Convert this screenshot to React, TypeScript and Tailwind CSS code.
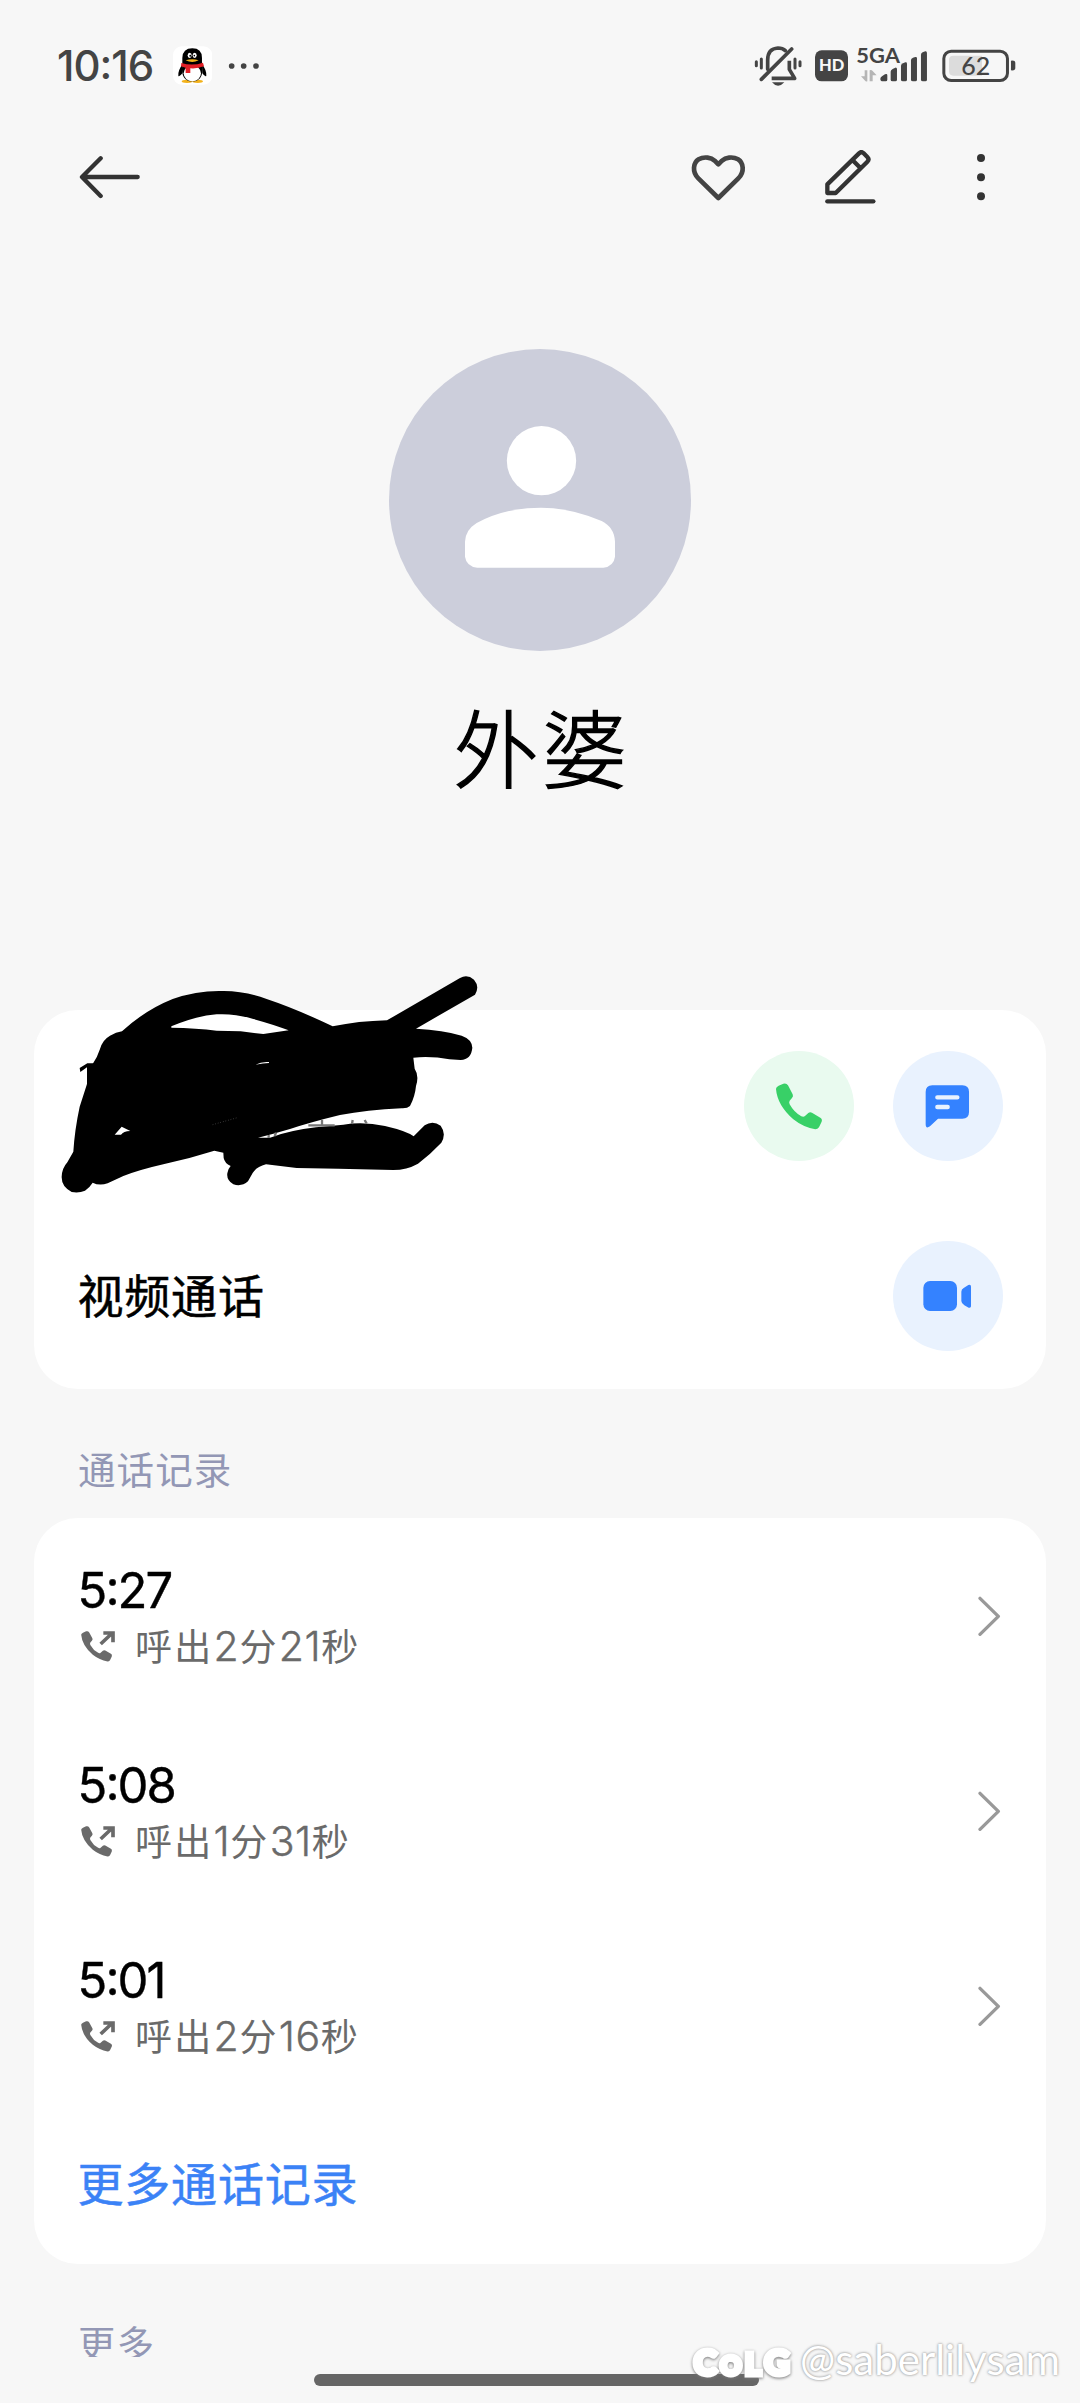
import type { ReactNode } from 'react';

interface CallLog {
  time: string;
  duration: string;
}

const callLogs: CallLog[] = [
  { time: '5:27', duration: '呼出2分21秒' },
  { time: '5:08', duration: '呼出1分31秒' },
  { time: '5:01', duration: '呼出2分16秒' },
];

const HANDSET =
  'M168 206Q168 200 176 196L190 190Q199 187 204 195L218 222Q221 228 216 233L209 241Q206 246 209 252Q222 276 244 288Q251 291 255 287L265 278Q270 274 276 277L301 292Q308 296 305 304L297 321Q293 327 286 327Q250 321 220 297Q172 255 168 206Z';

function QQIcon() {
  return (
    <svg viewBox="398 45 118 126" className="h-[42px] w-[39.3px]">
      <rect x="398" y="49" width="118" height="115" rx="26" fill="#fff" />
      <ellipse cx="440" cy="154" rx="16" ry="5" fill="#f3b21b" />
      <ellipse cx="472" cy="154" rx="16" ry="5" fill="#f3b21b" />
      <path d="M427 102Q412 122 414 138Q418 141 426 130ZM485 102Q500 122 498 138Q494 141 486 130Z" fill="#000" />
      <path d="M426 104V84Q427 55 456 55Q485 55 485 84V104Q492 154 456 154Q420 154 426 104Z" fill="#000" />
      <ellipse cx="456" cy="130" rx="26" ry="24" fill="#fff" />
      <ellipse cx="448" cy="76" rx="6" ry="8" fill="#fff" />
      <ellipse cx="463" cy="76" rx="6" ry="8" fill="#fff" />
      <circle cx="450" cy="77" r="3" fill="#000" />
      <circle cx="462" cy="77" r="2.5" fill="#000" />
      <path d="M436 91Q456 84 475 91Q456 101 436 91Z" fill="#f3b21b" />
      <path d="M423 99Q456 109 488 98L491 109Q470 117 450 115V129H436V113Q428 112 422 109Z" fill="#e31f26" />
    </svg>
  );
}

function StatusBar() {
  return (
    <div className="flex h-[132px] items-center pr-[64px] pl-[57px] text-[#444]">
      <span className="w-[115.5px] font-[Inter] text-[42px] leading-none font-medium tracking-[-1px]">
        10<span className="relative -top-[2px]">:</span>16
      </span>
      <QQIcon />
      <svg viewBox="566 45 96 126" className="ml-[16.5px] h-[42px] w-8" fill="currentColor">
        <circle cx="577" cy="108" r="8.5" />
        <circle cx="613" cy="108" r="8.5" />
        <circle cx="650" cy="108" r="8.5" />
      </svg>

      <div className="ml-auto flex items-center">
        {/* muted bell */}
        <svg viewBox="280 45 144 126" className="h-[42px] w-12" fill="none" stroke="currentColor" strokeWidth="11" strokeLinecap="round">
          <path d="M321 118V90Q321 56 352 54Q366 54 374 62" />
          <path d="M386 92V118L402 145H333" strokeLinejoin="round" strokeLinecap="butt" />
          <path d="M302 148L393 57" />
          <path d="M287 95V107M302 87V114M403 87V114M418 95V107" strokeWidth="9" />
          <path d="M334 157H371Q352 178 334 157Z" fill="currentColor" stroke="none" />
        </svg>
        <svg viewBox="465 45 99 126" className="ml-[13.7px] h-[42px] w-[33px]">
          <rect x="465" y="61" width="99" height="93" rx="20" fill="#444" />
          <text x="477" y="124" fontSize="48" fontWeight="900" fill="#f7f7f7" fontFamily="Lato" textLength="76" lengthAdjust="spacingAndGlyphs">HD</text>
        </svg>
        <svg viewBox="588 45 214 126" className="ml-2 h-[42px] w-[71.3px] overflow-visible" fill="currentColor">
          <text x="589" y="98" fontSize="64" fontWeight="700" fontFamily="Lato" textLength="131" lengthAdjust="spacingAndGlyphs">5GA</text>
          <path d="M614 121H622V154Q618 156 614 151L603 139H614ZM629 154V121Q634 118 638 123L650 136H638V154Z" fill="#b5b5b5" />
          <path d="M661 146Q661 141 667 138L675 133Q682 130 682 136V149Q682 154 677 154H669Q661 154 661 146Z" />
          <path d="M692 125Q692 120 698 117L706 113Q711 112 711 118V149Q711 154 706 154H698Q692 154 692 149Z" />
          <path d="M723 107Q723 103 729 100L736 97Q741 96 741 101V149Q741 154 736 154H729Q723 154 723 149Z" />
          <path d="M753 90Q753 86 759 83L766 81Q771 80 771 85V149Q771 154 766 154H759Q753 154 753 149Z" />
          <path d="M783 74Q783 70 788 67L796 64Q801 63 801 69V149Q801 154 796 154H789Q783 154 783 149Z" />
        </svg>
        <svg viewBox="844 45 223 126" className="ml-[14px] h-[42px] w-[74.3px]">
          <rect x="849.5" y="63.500" width="191" height="88" rx="22" fill="none" stroke="#444" strokeWidth="9" />
          <path d="M878 77H964V137H878Q865 137 865 124V90Q865 77 878 77Z" fill="#dcdcdc" />
          <path d="M1051 92Q1064 90 1064 99V114Q1064 123 1051 121Z" fill="#444" />
          <text x="902" y="134" fontSize="76" fill="#444" fontFamily="Lato" fontWeight="500" textLength="87" lengthAdjust="spacingAndGlyphs">62</text>
        </svg>
      </div>
    </div>
  );
}

function ActionBar() {
  return (
    <div className="flex h-[90px] items-center pr-[95px] pl-[79px] text-[#333]">
      <svg viewBox="117 359 183 162" className="h-[54px] w-[61px]" fill="none" stroke="currentColor" strokeWidth="13" strokeLinecap="round" strokeLinejoin="round">
        <path d="M182 384L126 440L182 497M128 440H293" />
      </svg>
      <svg viewBox="94 359 164 162" className="ml-auto h-[54px] w-[54.7px]" fill="none" stroke="#444" strokeWidth="14" strokeLinejoin="round">
        <path d="M176 503L116 444C96 424 101 397 117 387C134 377 155 382 165 391L176 402L187 391C197 382 218 377 235 387C251 397 256 424 236 444Z" />
      </svg>
      <svg viewBox="494 359 152 162" className="ml-[79px] h-[54px] w-[50.7px]" fill="none" stroke="currentColor" strokeWidth="13" strokeLinejoin="round">
        <path d="M501 488V462L596 369Q603 362 610 369L621 380Q628 387 621 394L526 488ZM577 390L601 414" />
        <path d="M501 513H639" strokeLinecap="round" />
      </svg>
      <svg viewBox="950 359 24 162" className="ml-[101.300px] h-[54px] w-2" fill="currentColor">
        <circle cx="962" cy="383" r="12" />
        <circle cx="962" cy="441" r="12" />
        <circle cx="962" cy="498" r="12" />
      </svg>
    </div>
  );
}

function RoundButton({ label, className, children }: { label: string; className: string; children: ReactNode }) {
  return (
    <button aria-label={label} className={`flex size-[110px] items-center justify-center rounded-full ${className}`}>
      {children}
    </button>
  );
}

function Scribble() {
  return (
    <svg viewBox="0 0 1440 780" className="pointer-events-none absolute -top-[61px] -left-[4px] h-[260px] w-[480px]">
      <path d="M149 354L172 340H200V415H171V352L151 366Z" fill="#000" />
      <path
        d="M95 680Q96 655 112 637L130 605Q134 540 149 470L170 405L188 342Q202 322 210 297Q217 270 240 257Q258 247 276 244Q345 180 428 147Q500 122 572 123Q640 121 710 147Q800 177 908 229Q985 213 1071 211L1290 84Q1312 72 1332 89Q1350 110 1335 134L1158 236Q1240 240 1295 257Q1326 268 1327 293Q1324 328 1292 330L1258 328Q1205 318 1150 323L1154 356Q1168 377 1158 408Q1155 440 1140 468Q1132 476 1115 475Q1010 480 930 495Q840 517 780 537Q730 552 684 563L720 563Q780 541 858 532L940 524Q1000 514 1065 528Q1130 543 1151 559L1184 526Q1208 510 1232 527Q1250 552 1234 578Q1200 614 1164 641Q1130 660 1090 660L925 656L800 654L708 643Q680 650 668 669L654 694Q635 711 610 703Q589 690 592 670Q594 656 602 648Q584 640 581 624L580 608L553 602Q480 625 400 643Q330 659 280 678L233 700Q208 708 188 698Q178 714 165 722Q147 730 125 726Q94 710 95 680Z"
        fill="#000"
      />
      <path d="M424 229Q500 197 560 193Q615 190 670 207Q732 224 776 241L700 252L632 244L560 242Q500 234 424 233Z" fill="#fff" />
      <path d="M676 344Q695 334 717 336V339Q700 339 676 344ZM254 554L275 530L301 543Q280 544 273 554Z" fill="#fff" />
      <path d="M548 524L622 503" stroke="#777" strokeWidth="2" strokeDasharray="2 6" />
      <path d="M835 526H914M876 510V526M968 510L966 522M1004 510L1010 521M716 555V564M738 548L734 558" fill="none" stroke="#777" strokeWidth="7" />
    </svg>
  );
}

function CallLogRow({ log }: { log: CallLog }) {
  const [hour, minute] = log.time.split(':');

  return (
    <div className="flex h-[195px] items-center justify-between pt-px pr-[45px] pl-[43.500px]">
      <div className="pt-[5px]">
        <p className="h-14 font-[Inter] text-[49px] leading-[56px] tracking-[-1.9px] text-black [-webkit-text-stroke:0.4px_#000]">
          {hour}
          <span className="relative -top-[3px]">:</span>
          {minute}
        </p>
        <div className="flex h-[55px] items-center text-[#6a6a6a]">
          <svg viewBox="150 1173 108 98" className="mr-[19px] ml-[2.500px] h-[32.7px] w-9" fill="currentColor">
            <path d={HANDSET} transform="translate(41 1051.500) scale(.67 .66)" />
            <path d="M212 1215L247 1182M220 1182H249V1210" fill="none" stroke="currentColor" strokeWidth="11" />
          </svg>
          <span className="text-[37px] leading-none tracking-[2.3px] whitespace-nowrap">
            {log.duration.split(/(\d+)/).map((part, i) =>
              /\d/.test(part) ? (
                <span key={i} className="font-[Inter] text-[41px] font-light tracking-[0.6px] [-webkit-text-stroke:0.4px_#6a6a6a]">
                  {part}
                </span>
              ) : (
                part
              ),
            )}
          </span>
        </div>
      </div>
      <svg viewBox="145 288 68 122" className="h-[40.7px] w-[22.7px]" fill="none" stroke="#999" strokeWidth="10" strokeLinecap="round" strokeLinejoin="round">
        <path d="M151 295L206 349L151 403" />
      </svg>
    </div>
  );
}

export default function App() {
  return (
    <div className="relative h-[2403px] w-[1080px] overflow-hidden bg-[#f7f7f7] font-['Noto_Sans_CJK_SC',sans-serif]">
      <div className="h-[2357px] overflow-hidden">
        <StatusBar />
        <ActionBar />

        {/* Contact */}
        <div className="flex flex-col items-center pt-[127px]">
          <svg viewBox="57 57 906 906" className="size-[302px]">
            <circle cx="510" cy="510" r="453" fill="#cccedb" />
            <circle cx="514.500" cy="392" r="104" fill="#fff" />
            <path d="M285 635Q286 600 320 579Q405 533 513 533Q600 533 695 573Q733 592 735 635V680Q731 709 700 713H322Q289 709 285 680Z" fill="#fff" />
          </svg>
          <h1 className="mt-[29px] h-[130px] pl-1 text-[85px] leading-[130px] font-light tracking-[3.5px] text-black [-webkit-text-stroke:1.4px_#000]">外婆</h1>
        </div>

        <section className="mx-[34px] mt-[200px] h-[379px] rounded-[44px] bg-white pt-px">
          <div className="relative flex h-[190px] items-center justify-end gap-[38.500px] pr-[43.500px]">
            <Scribble />
            <RoundButton label="拨打电话" className="bg-[#e9faef]">
              <svg viewBox="165 185 145 145" className="size-[48.3px]">
                <path d={HANDSET} fill="#38d067" />
              </svg>
            </RoundButton>
            <RoundButton label="发送短信" className="bg-[#e9f2fe]">
              <svg viewBox="616 193 134 134" className="size-[44.7px]">
                <path d="M638 197H728Q748 197 748 217V277Q748 297 728 297H655L631 320Q618 329 618 314V217Q618 197 638 197Z" fill="#3482ff" />
                <path d="M653 233H713M653 262H684" stroke="#e9f2fe" strokeWidth="13" strokeLinecap="round" />
              </svg>
            </RoundButton>
          </div>
          <div className="flex h-[190px] items-center justify-between pr-[43.500px] pl-[43.500px]">
            <span className="pb-[6px] text-[46px] tracking-[0.8px] text-black [-webkit-text-stroke:0.5px_#000]">视频通话</span>
            <RoundButton label="发起视频" className="bg-[#e9f2fe]">
              <svg viewBox="611 780 146 96" className="h-8 w-[48.7px]" fill="#3482ff">
                <rect x="612" y="783" width="101" height="90" rx="20" />
                <path d="M726 815Q726 808 733 804L747 795Q755 792 755 800V858Q755 865 748 863L735 856Q726 850 726 843Z" />
              </svg>
            </RoundButton>
          </div>
        </section>

        <h2 className="flex h-[129px] items-center pt-[28px] pl-[78px] text-[37.5px] leading-none tracking-[1.1px] text-[#9397b5]">通话记录</h2>

        <section className="mx-[34px] h-[746px] rounded-[44px] bg-white">
          {callLogs.map((log) => (
            <CallLogRow key={log.time} log={log} />
          ))}
          <a className="flex h-[161px] items-center pb-[5px] pl-[43.500px] text-[46px] tracking-[0.8px] text-[#3b82f6] [-webkit-text-stroke:0.5px_#3b82f6]">
            更多通话记录
          </a>
        </section>

        <h2 className="flex h-[93px] items-end pl-[78px] text-[37.5px] leading-[31px] tracking-[1.1px] text-[#9397b5]">更多</h2>
      </div>

      {/* Gesture bar */}
      <div className="flex h-[46px] justify-center pt-[17px] pr-[7px]">
        <div className="h-[12px] w-[445px] rounded-full bg-[#666]" />
      </div>

      {/* Watermark */}
      <div className="absolute right-[20px] bottom-[16px] flex items-center gap-[7px] text-white">
        <span className="flex items-baseline pt-1 font-[Lato] text-[35px] leading-none font-black tracking-[3.4px] [-webkit-text-stroke:5px_#fff] [filter:drop-shadow(0_1px_1.5px_#777)]">
          C<span className="text-[26px]">O</span>
          <span className="text-[31px]">L</span>G
        </span>
        <span className="font-[Lato] text-[42px] leading-[56px] [text-shadow:0_0_3px_#999,0_0_2px_#bbb]">@saberlilysam</span>
      </div>
    </div>
  );
}
